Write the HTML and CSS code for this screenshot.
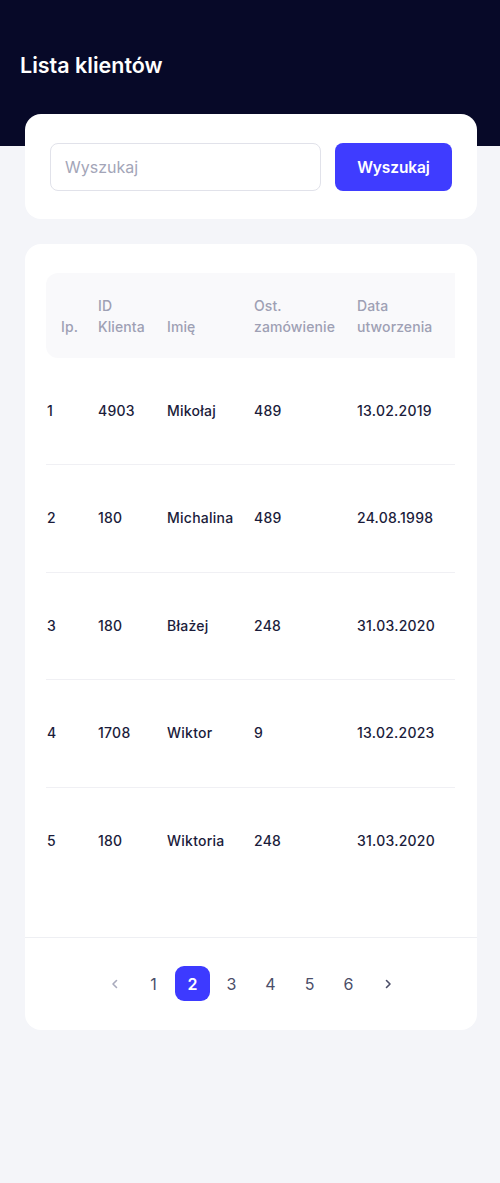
FILE: index.html
```html
<!DOCTYPE html>
<html lang="pl">
<head>
<meta charset="utf-8">
<title>Lista klientów</title>
<link rel="stylesheet" href="styles.css">
</head>
<body>
<div class="page">
  <header class="top">
    <h1 class="title">Lista klientów</h1>
  </header>
  <main class="content">
    <section class="card search-card">
      <input class="search-input" type="text" placeholder="Wyszukaj">
      <button class="search-btn" type="button">Wyszukaj</button>
    </section>
    <section class="card table-card">
      <div class="table-wrap">
        <table class="clients">
          <thead>
            <tr>
              <th class="c-ip">Ip.</th>
              <th class="c-id">ID<br>Klienta</th>
              <th class="c-name">Imię</th>
              <th class="c-order">Ost.<br>zamówienie</th>
              <th class="c-date">Data<br>utworzenia</th>
            </tr>
          </thead>
          <tbody>
            <tr><td>1</td><td>4903</td><td>Mikołaj</td><td>489</td><td>13.02.2019</td></tr>
            <tr><td>2</td><td>180</td><td>Michalina</td><td>489</td><td>24.08.1998</td></tr>
            <tr><td>3</td><td>180</td><td>Błażej</td><td>248</td><td>31.03.2020</td></tr>
            <tr><td>4</td><td>1708</td><td>Wiktor</td><td>9</td><td>13.02.2023</td></tr>
            <tr><td>5</td><td>180</td><td>Wiktoria</td><td>248</td><td>31.03.2020</td></tr>
          </tbody>
        </table>
      </div>
      <nav class="pager">
        <span class="pg pg-prev">
          <svg width="12" height="12" viewBox="0 0 12 12"><path d="M7.5 2.5 4 6l3.5 3.5" fill="none" stroke="currentColor" stroke-width="1.6" stroke-linecap="round" stroke-linejoin="round"/></svg>
        </span>
        <span class="pg">1</span>
        <span class="pg pg-active">2</span>
        <span class="pg">3</span>
        <span class="pg">4</span>
        <span class="pg">5</span>
        <span class="pg">6</span>
        <span class="pg pg-next">
          <svg width="12" height="12" viewBox="0 0 12 12"><path d="M4.5 2.5 8 6l-3.5 3.5" fill="none" stroke="currentColor" stroke-width="1.6" stroke-linecap="round" stroke-linejoin="round"/></svg>
        </span>
      </nav>
    </section>
  </main>
</div>
</body>
</html>
```
FILE: styles.css
```css
* { box-sizing: border-box; }
html, body { margin: 0; padding: 0; }
body {
  font-family: Inter, "Noto Sans", sans-serif;
  background: linear-gradient(#070928 0, #070928 146px, #f4f5f9 146px);
  background-color: #f4f5f9;
  min-height: 1183px;
  color: #1b1c3b;
}
.top { padding: 50px 20px 34px; }
.title {
  margin: 0;
  font-size: 21.5px;
  line-height: 30px;
  font-weight: 600;
  color: #ffffff;
  letter-spacing: 0;
}
.content {
  padding: 0 23px 0 25px;
  display: flex;
  flex-direction: column;
  gap: 25px;
}
.card {
  background: #ffffff;
  border-radius: 16px;
}
.search-card {
  display: flex;
  gap: 14px;
  padding: 29px 25px 28px;
}
.search-input {
  flex: 1;
  min-width: 0;
  height: 48px;
  border: 1px solid #e1e2ea;
  border-radius: 8px;
  padding: 0 14px;
  font-family: inherit;
  font-size: 16px;
  color: #1b1c3b;
  outline: none;
}
.search-input::placeholder { color: #a3a5b8; }
.search-btn {
  width: 117px;
  height: 48px;
  border: 0;
  border-radius: 8px;
  background: #3f3cff;
  color: #fff;
  font-family: inherit;
  font-size: 15.5px;
  font-weight: 600;
  letter-spacing: -0.1px;
}
.table-card { padding: 29px 0 0; }
.table-wrap {
  margin: 0 22px 0 21px;
  overflow: hidden;
  padding-bottom: 42px;
}
.clients {
  border-collapse: separate;
  border-spacing: 0;
  font-size: 14px;
  width: 480px;
}
.clients th {
  height: 84.5px;
  text-align: left;
  vertical-align: bottom;
  font-weight: 500;
  color: #9ea0b4;
  line-height: 21px;
  padding: 0 0 21px;
  background: #f9f9fb;
  letter-spacing: 0.1px;
}
.clients th.c-ip { padding-left: 15px; border-radius: 12px 0 0 12px; }
.c-ip { width: 52px; }
.c-id { width: 69px; }
.c-name { width: 87px; }
.c-order { width: 103px; }
.clients td {
  height: 107.5px;
  padding: 0;
  font-weight: 500;
  color: #1b1c3b;
  line-height: 20px;
  vertical-align: middle;
  border-bottom: 1px solid #f0f0f4;
  letter-spacing: 0.25px;
}
.clients td:first-child { padding-left: 1px; }
.clients tbody tr:last-child td { border-bottom: 0; }
.pager {
  border-top: 1px solid #eeeff3;
  display: flex;
  justify-content: center;
  gap: 4px;
  padding: 28px 0 29px;
}
.pg {
  width: 35px;
  height: 35px;
  display: flex;
  align-items: center;
  justify-content: center;
  font-size: 16px;
  color: #4b4e68;
  border-radius: 9px;
}
.pg-active {
  background: #3d3aff;
  color: #fff;
  font-weight: 600;
}
.pg-prev { color: #a9abbd; }
.pg-next { color: #4b4e68; }
```
